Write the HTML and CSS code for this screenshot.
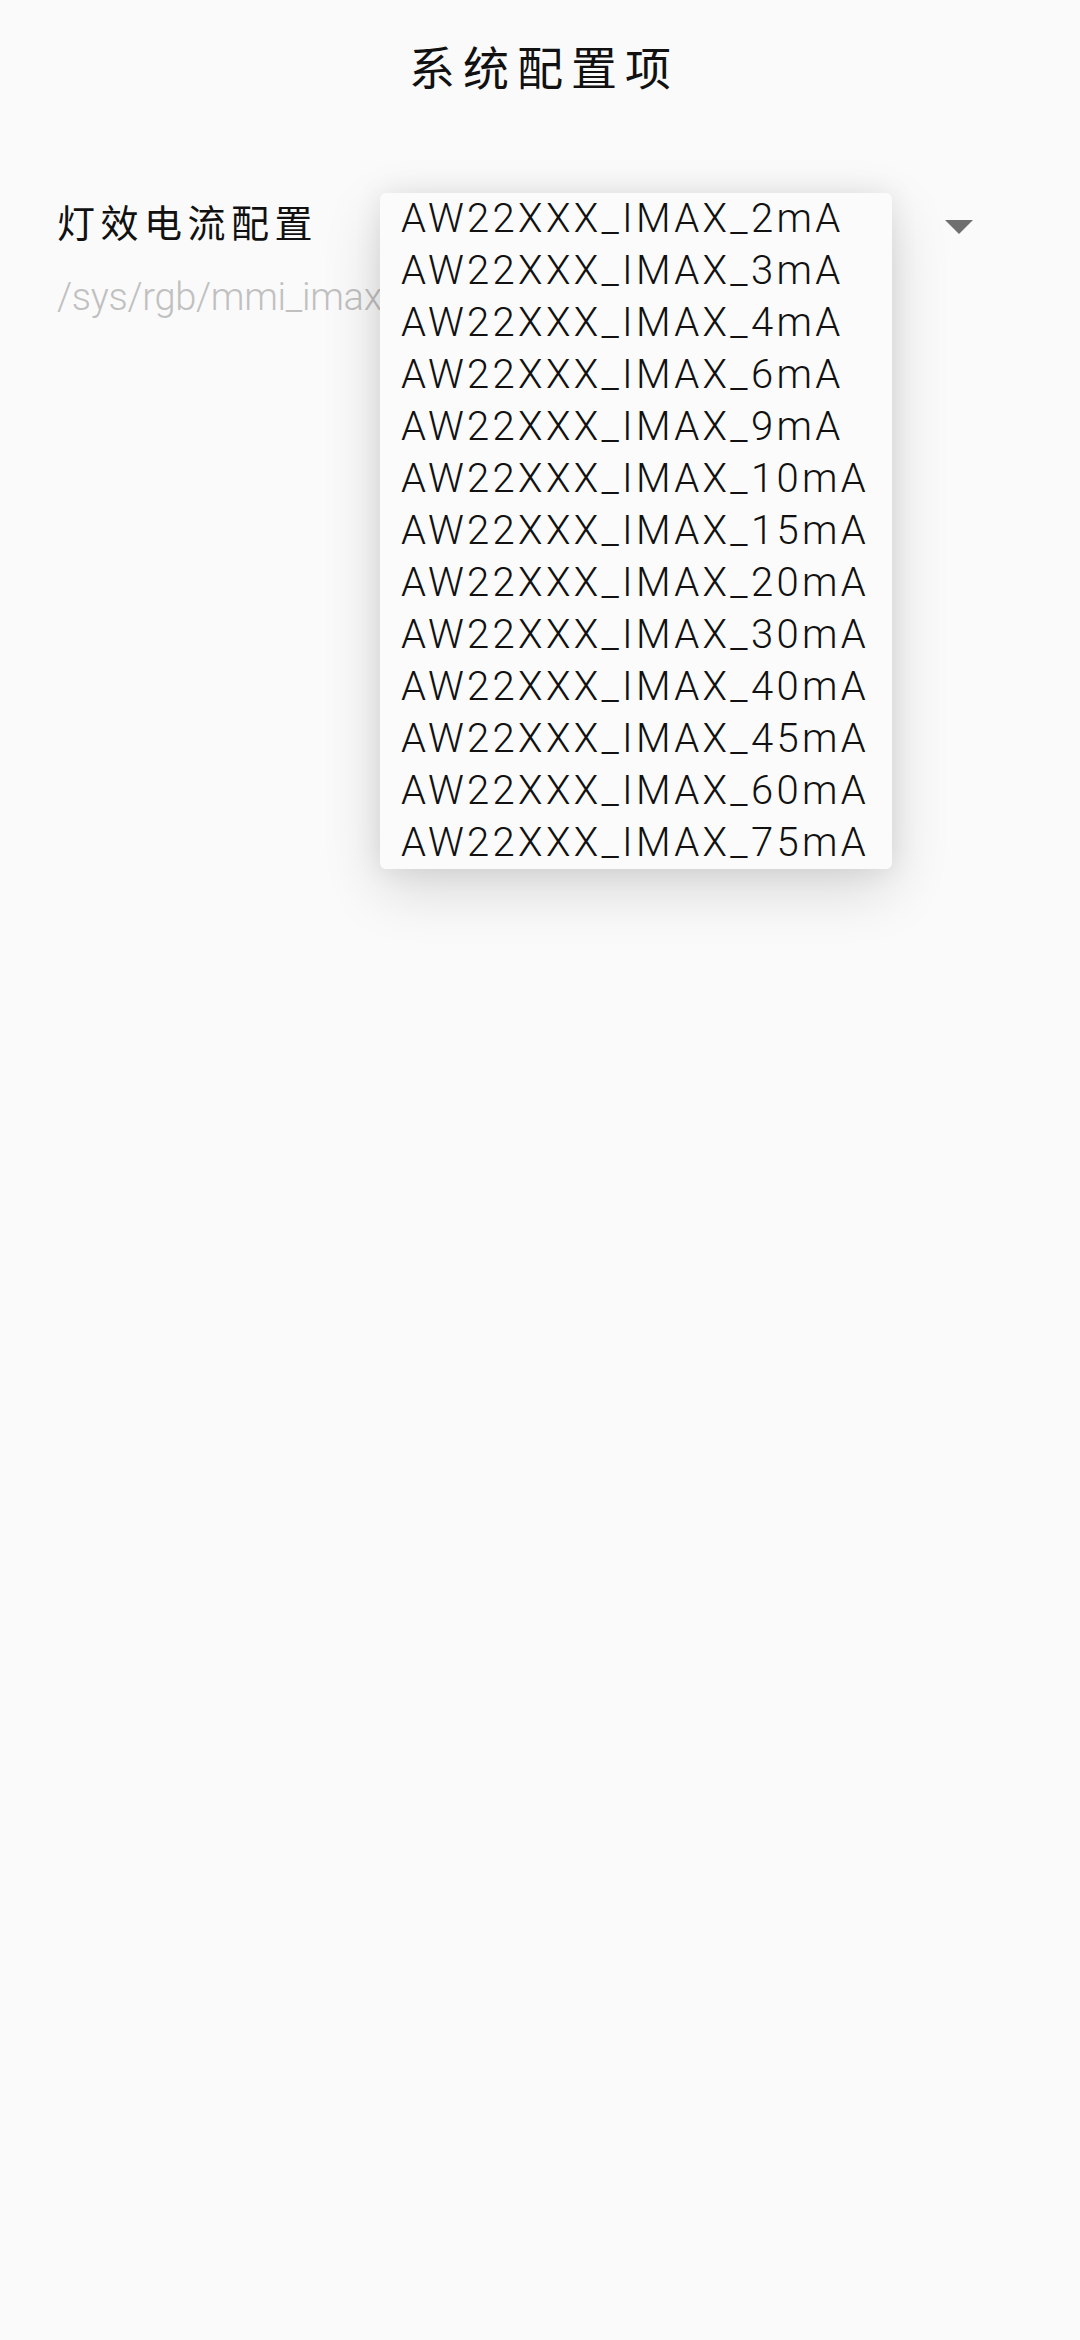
FILE: index.html
```html
<!DOCTYPE html>
<html lang="zh">
<head>
<meta charset="utf-8">
<link rel="stylesheet" href="styles.css">
</head>
<body>
<div class="page">
  <header class="titlebar"><h1 class="title">系统配置项</h1></header>
  <section class="setting">
    <div class="setting-text">
      <div class="setting-label">灯效电流配置</div>
      <div class="setting-path">/sys/rgb/mmi_imax</div>
    </div>
    <div class="spinner">
      <svg class="spinner-arrow" width="28" height="14" viewBox="0 0 28 14"><path d="M0 0 L28 0 L14 14 Z" fill="#6f6f6f"/></svg>
    </div>
    <ul class="dropdown">
      <li>AW22XXX_IMAX_2mA</li>
      <li>AW22XXX_IMAX_3mA</li>
      <li>AW22XXX_IMAX_4mA</li>
      <li>AW22XXX_IMAX_6mA</li>
      <li>AW22XXX_IMAX_9mA</li>
      <li>AW22XXX_IMAX_10mA</li>
      <li>AW22XXX_IMAX_15mA</li>
      <li>AW22XXX_IMAX_20mA</li>
      <li>AW22XXX_IMAX_30mA</li>
      <li>AW22XXX_IMAX_40mA</li>
      <li>AW22XXX_IMAX_45mA</li>
      <li>AW22XXX_IMAX_60mA</li>
      <li>AW22XXX_IMAX_75mA</li>
    </ul>
  </section>
</div>
</body>
</html>
```
FILE: styles.css
```css
html, body {
  margin: 0;
  padding: 0;
  background: #fafafa;
}
.page {
  width: 1080px;
  height: 2340px;
  background: #fafafa;
  font-family: Roboto, "Noto Sans CJK SC", sans-serif;
}
.titlebar {
  height: 130px;
  display: flex;
  align-items: center;
  justify-content: center;
}
.title {
  margin: 0;
  font-family: "Noto Sans CJK SC", sans-serif;
  font-weight: 400;
  font-size: 46px;
  letter-spacing: 8px;
  padding-left: 8px;
  color: #111;
  line-height: 1;
}
.setting {
  position: relative;
  display: flex;
  align-items: flex-start;
  padding: 66px 0 0 57px;
}
.setting-text {
  width: 330px;
}
.setting-label {
  font-family: "Noto Sans CJK SC", sans-serif;
  font-size: 38px;
  letter-spacing: 5.5px;
  line-height: 50px;
  color: #111;
}
.setting-path {
  font-family: Roboto, sans-serif;
  font-weight: 300;
  font-size: 38px;
  letter-spacing: -0.3px;
  line-height: 50px;
  margin-top: 26px;
  color: #c0c0c0;
  white-space: nowrap;
}
.spinner {
  flex: 1;
  display: flex;
  justify-content: flex-end;
  padding: 24px 107px 0 0;
}
.spinner-arrow {
  display: block;
}
.dropdown {
  position: absolute;
  left: 380px;
  top: 63px;
  width: 512px;
  margin: 0;
  padding: 0;
  list-style: none;
  background: #fbfbfb;
  border-radius: 6px;
  box-shadow: 0 20px 60px rgba(0,0,0,0.14), 0 0 28px rgba(0,0,0,0.08);
}
.dropdown li {
  height: 52px;
  line-height: 52px;
  padding-left: 21px;
  font-family: Roboto, sans-serif;
  font-weight: 300;
  font-size: 40px;
  letter-spacing: 3.3px;
  color: #111;
  white-space: nowrap;
}
```
